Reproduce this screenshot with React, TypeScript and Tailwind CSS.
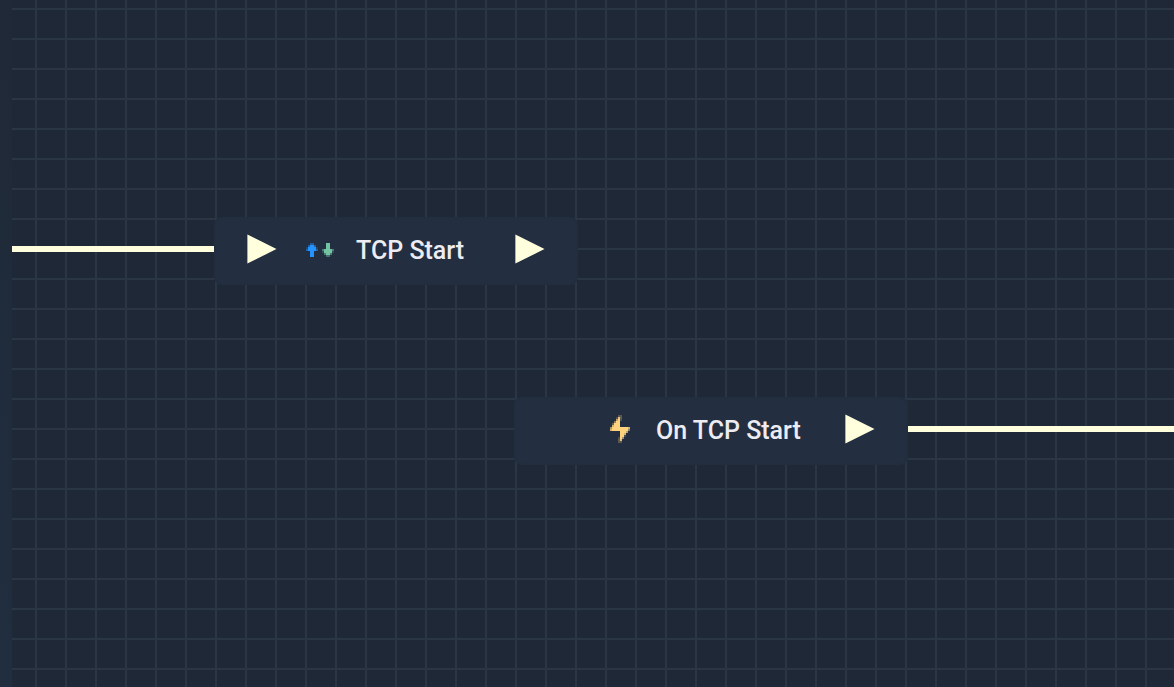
import type { ReactNode } from "react";

type Cell = [x: number, y: number, w: number, h: number, opacity: number];

const UP_ARROW: Cell[] = [
  [2, 0, 2, 1, 0.45],
  [1, 1, 1, 1, 0.5],
  [2, 1, 2, 1, 1],
  [4, 1, 1, 1, 0.5],
  [0, 2, 1, 1, 0.2],
  [1, 2, 4, 1, 1],
  [5, 2, 1, 1, 0.2],
  [0, 3, 1, 1, 0.5],
  [1, 3, 4, 1, 1],
  [5, 3, 1, 1, 0.5],
  [2, 4, 2, 3, 1],
];

const DOWN_ARROW: Cell[] = [
  [2, 0, 2, 3, 1],
  [0, 3, 1, 1, 0.5],
  [1, 3, 4, 1, 1],
  [5, 3, 1, 1, 0.5],
  [0, 4, 1, 1, 0.2],
  [1, 4, 4, 1, 1],
  [5, 4, 1, 1, 0.2],
  [1, 5, 1, 1, 0.5],
  [2, 5, 2, 1, 1],
  [4, 5, 1, 1, 0.5],
  [2, 6, 2, 1, 0.45],
];

const BOLT: Cell[] = [
  [4, 0, 2, 1, 0.25],
  [3, 1, 1, 1, 0.2],
  [4, 1, 1, 1, 0.9],
  [5, 1, 1, 1, 0.3],
  [3, 2, 1, 1, 0.7],
  [4, 2, 1, 1, 1],
  [5, 2, 1, 1, 0.2],
  [2, 3, 1, 1, 0.5],
  [3, 3, 2, 1, 1],
  [1, 4, 1, 1, 0.3],
  [2, 4, 3, 1, 1],
  [1, 5, 1, 1, 0.8],
  [2, 5, 3, 1, 1],
  [0, 6, 1, 1, 0.6],
  [1, 6, 8, 1, 1],
  [9, 6, 1, 1, 0.8],
  [0, 7, 1, 1, 0.8],
  [1, 7, 8, 1, 1],
  [9, 7, 1, 1, 0.5],
  [5, 8, 3, 1, 1],
  [8, 8, 1, 1, 0.7],
  [5, 9, 2, 1, 1],
  [7, 9, 1, 1, 0.8],
  [5, 10, 2, 1, 1],
  [7, 10, 1, 1, 0.2],
  [4, 11, 1, 1, 0.2],
  [5, 11, 1, 1, 1],
  [6, 11, 1, 1, 0.6],
  [4, 12, 1, 1, 0.3],
  [5, 12, 1, 1, 0.9],
  [4, 13, 2, 1, 0.25],
];

function Pixels({ cells, fill, x = 0 }: { cells: Cell[]; fill: string; x?: number }) {
  return (
    <g fill={fill} transform={`translate(${x} 0)`} shapeRendering="crispEdges">
      {cells.map(([cx, cy, w, h, o]) => (
        <rect key={`${cx}-${cy}`} x={cx} y={cy} width={w} height={h} opacity={o} />
      ))}
    </g>
  );
}

function TransferIcon() {
  return (
    <svg width="28" height="16" viewBox="0 -1 14 8" aria-hidden="true">
      <Pixels cells={UP_ARROW} fill="#2492ff" />
      <Pixels cells={DOWN_ARROW} fill="#71c3a1" x={8} />
    </svg>
  );
}

function BoltIcon() {
  return (
    <svg width="20" height="28" viewBox="0 0 10 14" aria-hidden="true">
      <Pixels cells={BOLT} fill="#ffd27d" />
    </svg>
  );
}

function Pin() {
  return (
    <svg className="shrink-0" width="30" height="30" viewBox="0 0 30 30" aria-hidden="true">
      <path d="M0.4 0.4 L29.5 15 L0.4 29.6 Z" fill="#ffffdd" />
    </svg>
  );
}

function FlowNode({
  title,
  icon,
  input = false,
  place,
}: {
  title: string;
  icon: ReactNode;
  input?: boolean;
  place: string;
}) {
  return (
    <section
      className={`absolute flex h-[68px] items-center rounded-lg border-2 border-[#222d3e] bg-[#232f41] px-[31px] pb-1 ${place}`}
    >
      <div className="w-[30px] shrink-0">{input && <Pin />}</div>
      <div className="flex w-[79px] shrink-0 items-center justify-center pl-[7px]">{icon}</div>
      <h2 className="grow pt-1 text-[25px] leading-9 font-medium whitespace-nowrap text-[#ececf2]">{title}</h2>
      <Pin />
    </section>
  );
}

export default function App() {
  return (
    <div className="flex min-h-screen bg-[#1f2937] font-[Roboto,sans-serif]">
      <aside className="w-3 shrink-0 bg-linear-to-b from-[#1f2937] to-[#212e3f]" />
      <main className="relative grow overflow-hidden bg-[#1e2836] bg-[linear-gradient(to_right,#2a3643_2px,transparent_2px),linear-gradient(to_bottom,#2a3643_2px,transparent_2px)] bg-size-[30px_30px] bg-position-[23px_8px]">
        <div className="absolute top-[246px] left-0 h-1.5 w-[202px] bg-[#ffffdd]" />
        <div className="absolute top-[426px] right-0 left-[896px] h-1.5 bg-[#ffffdd]" />
        <FlowNode
          title="TCP Start"
          input
          place="top-[217px] left-[202px] w-[364px]"
          icon={<TransferIcon />}
        />
        <FlowNode
          title="On TCP Start"
          place="top-[397px] left-[502px] w-[394px]"
          icon={<BoltIcon />}
        />
      </main>
    </div>
  );
}
